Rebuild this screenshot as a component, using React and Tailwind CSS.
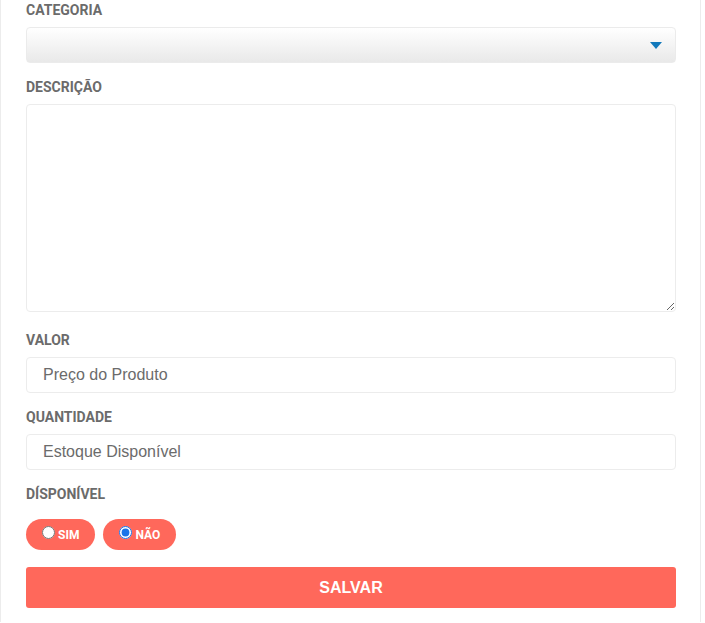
import React, { useState } from 'react';

const Label = ({ children, className = '' }) => (
  <div
    className={`h-[20px] leading-[20px] text-[14px] font-bold uppercase text-[#6b6b6b] ${className}`}
    style={{ fontFamily: 'Roboto, "Liberation Sans", sans-serif' }}
  >
    {children}
  </div>
);

const TextInput = ({ placeholder }) => (
  <input
    type="text"
    placeholder={placeholder}
    className="block h-[36px] w-full rounded-[4px] border border-[#ececec] bg-white px-[16px] text-[16px] text-[#555] placeholder:text-[#6b6b6b] outline-none"
    style={{ fontFamily: '"Liberation Sans", Arial, sans-serif' }}
  />
);

const Pill = ({ text, checked, onChange }) => (
  <label
    className="flex h-[31px] cursor-pointer items-center rounded-full bg-[#ff685b] pl-[16px] pr-[16px] text-[12px] font-bold text-white"
    style={{ fontFamily: 'Roboto, "Liberation Sans", sans-serif' }}
  >
    <input
      type="radio"
      name="disponivel"
      checked={checked}
      onChange={onChange}
      className="m-0 mr-[3px] h-[13px] w-[13px] -translate-y-[2px] accent-[#1a73e8]"
    />
    {text}
  </label>
);

export default function App() {
  const [disponivel, setDisponivel] = useState('nao');

  return (
    <div className="min-h-[623px] w-[705px] bg-white">
      <div className="w-[701px] border-x border-[#ececec] pl-[25px] pr-[24px] pb-[14px]">
        <Label className="mb-[7px]">Categoria</Label>
        <div className="mb-[14px] flex h-[36px] items-center justify-end rounded-[4px] border border-[#ebebeb] bg-gradient-to-b from-white to-[#e9e9e9] pr-[13px]">
          <svg width="12" height="7" viewBox="0 0 12 7">
            <path d="M0 0H12L6 7Z" fill="#1279bb" />
          </svg>
        </div>

        <Label className="mb-[7px]">Descrição</Label>
        <textarea className="mb-[18px] block h-[208px] w-full rounded-[4px] border border-[#ececec] bg-white p-2 outline-none" />

        <Label className="mb-[7px]">Valor</Label>
        <div className="mb-[14px]">
          <TextInput placeholder="Preço do Produto" />
        </div>

        <Label className="mb-[7px]">Quantidade</Label>
        <div className="mb-[14px]">
          <TextInput placeholder="Estoque Disponível" />
        </div>

        <Label className="mb-[15px]">Dísponível</Label>
        <div className="mb-[17px] flex gap-[8px]">
          <Pill text="SIM" checked={disponivel === 'sim'} onChange={() => setDisponivel('sim')} />
          <Pill text="NÃO" checked={disponivel === 'nao'} onChange={() => setDisponivel('nao')} />
        </div>

        <button
          className="block h-[41px] w-full rounded-[3px] bg-[#ff685b] text-[16px] font-bold text-white"
          style={{ fontFamily: '"Liberation Sans", Arial, sans-serif' }}
        >
          SALVAR
        </button>
      </div>
    </div>
  );
}
